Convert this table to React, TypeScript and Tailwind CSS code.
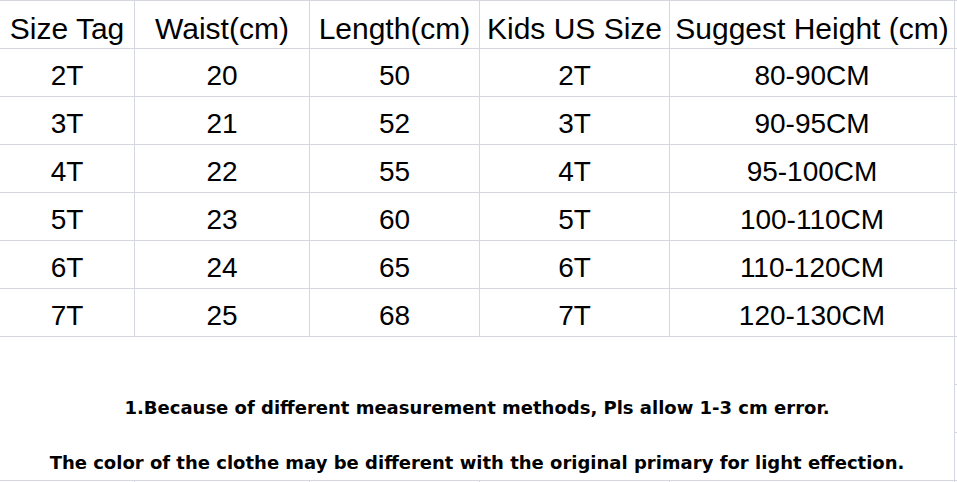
const header = ['Size Tag', 'Waist(cm)', 'Length(cm)', 'Kids US Size', 'Suggest Height (cm)'];

const rows = [
  ['2T', '20', '50', '2T', '80-90CM'],
  ['3T', '21', '52', '3T', '90-95CM'],
  ['4T', '22', '55', '4T', '95-100CM'],
  ['5T', '23', '60', '5T', '100-110CM'],
  ['6T', '24', '65', '6T', '110-120CM'],
  ['7T', '25', '68', '7T', '120-130CM'],
];

const gridCols = 'grid grid-cols-[135px_175px_170px_190px_285px_1fr]';
const line = 'border-[#d4d6e2]';

export default function App() {
  return (
    <div className="w-[957px] h-[482px] overflow-hidden bg-white text-black font-['Liberation_Sans',Arial,sans-serif]">
      {/* header */}
      <div className={`${gridCols} border-t border-b ${line}`}>
        {header.map((h) => (
          <div
            key={h}
            className={`h-[47px] pt-2 flex items-center justify-center border-r ${line} text-[30px] whitespace-nowrap`}
          >
            {h}
          </div>
        ))}
        <div />
      </div>

      {/* body rows */}
      {rows.map((r) => (
        <div key={r[0]} className={`${gridCols} border-b ${line}`}>
          {r.map((c, i) => (
            <div
              key={i}
              className={`h-[47px] pt-[7px] flex items-center justify-center border-r ${line} text-[28px]`}
            >
              {c}
            </div>
          ))}
          <div />
        </div>
      ))}

      {/* notes */}
      <div className={`grid grid-cols-[955px_1fr] border-b ${line}`}>
        <div
          className={`h-[143px] pt-[59px] flex flex-col items-center gap-[31px] border-r ${line} font-['DejaVu_Sans',Verdana,sans-serif] font-bold text-[18px] leading-[24px] whitespace-nowrap`}
        >
          <p>1.Because of different measurement methods, Pls allow 1-3 cm error.</p>
          <p>The color of the clothe may be different with the original primary for light effection.</p>
        </div>
        <div className="flex flex-col">
          <div className={`h-[48px] border-b ${line}`} />
          <div className={`h-[48px] border-b ${line}`} />
          <div className="flex-1" />
        </div>
      </div>

      {/* next row edge */}
      <div className={gridCols}>
        {header.map((h) => (
          <div key={h} className={`h-[2px] border-r ${line}`} />
        ))}
        <div />
      </div>
    </div>
  );
}
